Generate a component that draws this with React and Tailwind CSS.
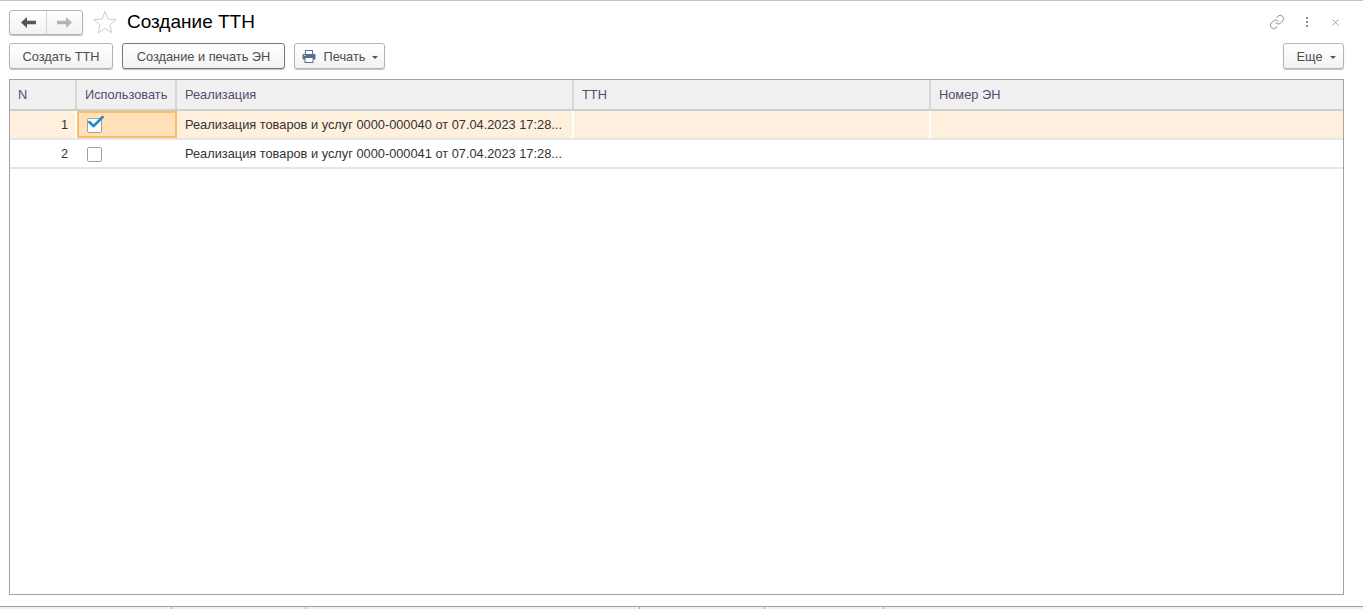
import React from "react";
import { Check, Link, X } from "lucide-react";

const FONT = "font-['Liberation_Sans',Arial,sans-serif]";
const GRID = "grid grid-cols-[67px_100px_397px_357px_1fr]";

const COLUMNS = ["N", "Использовать", "Реализация", "ТТН", "Номер ЭН"];
const ROWS = [
  { id: 1, name: "Реализация товаров и услуг 0000-000040 от 07.04.2023 17:28...", used: true },
  { id: 2, name: "Реализация товаров и услуг 0000-000041 от 07.04.2023 17:28...", used: false },
];
const TAB_WIDTHS = ["w-[172px]", "w-[134px]", "w-[334px]", "w-[125px]", "w-[119px]", "flex-1"];

const Caret = () => (
  <span className="ml-[7px] mt-[2px] h-0 w-0 border-x-[3px] border-t-[3px] border-x-transparent border-t-[#555]" />
);

const Button = ({ children, active, className }) => (
  <button
    className={`flex h-[26px] items-center justify-center rounded-[3px] border bg-gradient-to-b from-white to-[#f2f2f2] pt-[1px] text-[12.8px] text-[#4d4d4d] shadow-[0_1px_1px_rgba(0,0,0,0.25)] ${
      active ? "border-[#777]" : "border-[#b5b5b5]"
    } ${className}`}
  >
    {children}
  </button>
);

const PrinterIcon = () => (
  <svg className="mr-[8px]" width="14" height="13" viewBox="0 0 14 13">
    <rect x="3.5" y="0.5" width="7" height="4" fill="#fff" stroke="#5c6f86" />
    <rect x="0.5" y="4" width="13" height="5.5" rx="1" fill="#4f7196" />
    <rect x="3" y="7.5" width="8" height="5" fill="#fff" stroke="#5c6f86" />
    <rect x="2" y="5" width="1.5" height="1" fill="#d9e4ef" />
  </svg>
);

const StarIcon = () => (
  <svg width="24" height="24" viewBox="0 0 24 24">
    <path
      d="M12 1.5l3 7.6 8.2.5-6.3 5.2 2 8-6.9-4.400-6.900 4.400 2-8L.8 9.600l8.200-.5z"
      fill="#fff"
      stroke="#c9ced3"
      strokeWidth="1"
    />
  </svg>
);

// solid block arrow, the lucide ones are too rounded for this
const NavArrow = ({ color, flip }) => (
  <svg width="15" height="11" viewBox="0 0 15 11" className={flip ? "-scale-x-100" : ""}>
    <path d="M0 5.500L6 0v3.800h9v3.400H6V11z" fill={color} />
  </svg>
);

const CheckBox = ({ checked }) => (
  <span className="relative block h-[15px] w-[15px] rounded-[2px] border border-[#a0a0a0] bg-white">
    {checked && (
      <Check
        className="absolute -left-[2px] -top-[7px] text-[#1a8ccb]"
        size={20}
        strokeWidth={3}
      />
    )}
  </span>
);

const App = () => {
  return (
    <div className={`${FONT} flex h-[609px] w-[1363px] flex-col overflow-hidden border-t border-[#c4c4c4] bg-white`}>
      <div className="flex h-[41px] items-center pl-[9px] pr-[22px] pt-[1px]">
        <div className="flex h-[25px] w-[74px] rounded-[3px] border border-[#b5b5b5] bg-gradient-to-b from-white to-[#f2f2f2] shadow-[0_1px_1px_rgba(0,0,0,0.25)]">
          <span className="flex w-[37px] items-center justify-center border-r border-[#d4d4d4]">
            <NavArrow color="#555" />
          </span>
          <span className="flex flex-1 items-center justify-center">
            <NavArrow color="#b4b4b4" flip />
          </span>
        </div>
        <span className="ml-[10px]"><StarIcon /></span>
        <h1 className="ml-[10px] text-[19px] text-black">Создание ТТН</h1>
        <div className="ml-auto flex items-center text-[#7a7a7a]">
          <Link size={16} strokeWidth={1.25} />
          <span className="ml-[21px] flex flex-col gap-[1.5px]">
            <span className="h-[2.500px] w-[2.500px] rounded-full bg-[#666]" />
            <span className="h-[2.500px] w-[2.500px] rounded-full bg-[#666]" />
            <span className="h-[2.500px] w-[2.500px] rounded-full bg-[#666]" />
          </span>
          <X size={11} strokeWidth={1.5} className="ml-[22px]" />
        </div>
      </div>

      <div className="flex h-[37px] items-start pl-[9px] pr-[19px] pt-[1px]">
        <Button className="w-[104px]">Создать ТТН</Button>
        <Button active className="ml-[9px] w-[163px]">Создание и печать ЭН</Button>
        <Button className="ml-[9px] w-[91px] pl-[1px]">
          <PrinterIcon />
          Печать
          <Caret />
        </Button>
        <Button className="ml-auto w-[61px] pl-[5px]">
          Еще
          <Caret />
        </Button>
      </div>

      <div className="ml-[9px] mr-[19px] h-[516px] border border-[#a3a3a3] text-[12.8px]">
        <div className={`${GRID} h-[31px] border-b-2 border-[#cfcfcf] bg-[#f0f0f0] text-[#5a4a6e]`}>
          {COLUMNS.map((col) => (
            <div key={col} className="flex items-center border-r-2 border-[#d6d6d6] pl-[8px] last:border-r-0">
              {col}
            </div>
          ))}
        </div>
        {ROWS.map((row) => (
          <div
            key={row.id}
            className={`${GRID} h-[29px] border-b-2 border-[#e6e6e6] text-[#333] ${row.used ? "bg-[#fff0de]" : "bg-white"}`}
          >
            <div className={`flex items-center justify-end border-r-2 pr-[7px] pt-[1px] ${row.used ? "border-white" : "border-transparent"}`}>
              {row.id}
            </div>
            <div
              className={`flex items-start ${
                row.used
                  ? "border-2 border-[#fbbd69] bg-[#ffe0b8] pl-[8px] pt-[5px]"
                  : "pl-[10px] pt-[7px]"
              }`}
            >
              <CheckBox checked={row.used} />
            </div>
            <div className={`flex items-center overflow-hidden whitespace-nowrap border-r-2 pl-[8px] pt-[1px] ${row.used ? "border-white" : "border-transparent"}`}>
              {row.name}
            </div>
            <div className={`border-r-2 ${row.used ? "border-white" : "border-transparent"}`} />
            <div />
          </div>
        ))}
      </div>

      <div className="mt-[11px] flex h-[3px] border-t border-[#a3a3a3] bg-[#f0f0f0]">
        {TAB_WIDTHS.map((w) => (
          <div key={w} className={`${w} border-r border-[#a3a3a3] last:border-r-0`} />
        ))}
      </div>
    </div>
  );
};

export default App;
